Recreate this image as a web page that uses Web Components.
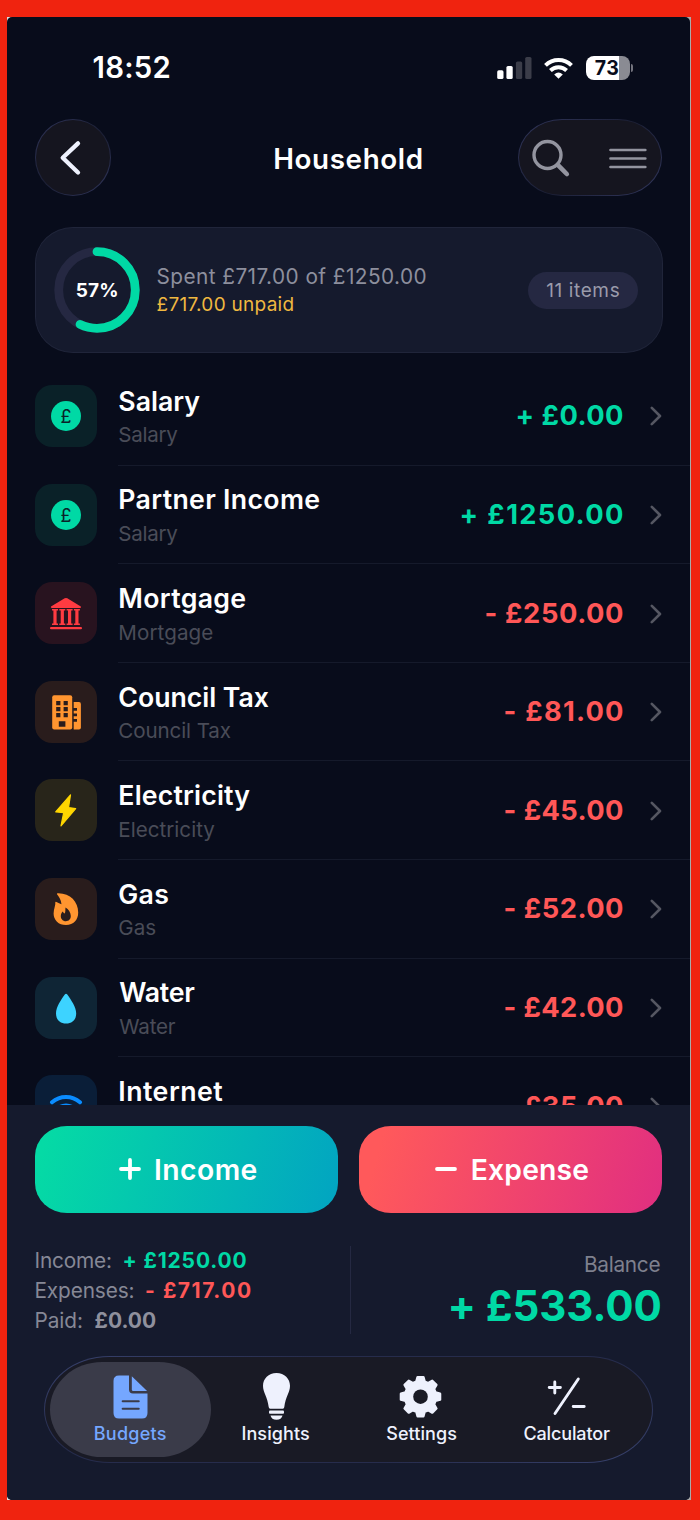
<!DOCTYPE html>
<html lang="en">
<head>
<meta charset="utf-8">
<title>Household budget</title>
<style>
html,body{margin:0;background:#f0230f}
body{width:700px;height:1520px;overflow:hidden;font-family:Inter,"Liberation Sans",sans-serif;font-optical-sizing:none;color:#fff}
</style>
</head>
<body>
<budget-app></budget-app>
<script>
const make = (name, html, setup) => customElements.define(name, class extends HTMLElement {
  constructor() {
    super();
    const t = document.createElement('template');
    t.innerHTML = typeof html === 'function' ? html(this) : html;
    this.attachShadow({mode: 'open'}).append(t.content.cloneNode(true));
    if (setup) setup(this, this.shadowRoot);
  }
});

const gear = (() => {
  const p = [];
  for (let i = 0; i < 8; i++) for (const [d, r] of [[-15.5, 15.6], [-8.5, 19.8], [8.5, 19.8], [15.5, 15.6]]) {
    const a = (i * 45 + d - 90) * Math.PI / 180;
    p.push((21 + r * Math.cos(a)).toFixed(2) + ' ' + (21 + r * Math.sin(a)).toFixed(2));
  }
  return 'M' + p.join('L') + 'Z';
})();

/* Category glyphs share a 62 x 62 tile */
const COIN = '<circle cx="31" cy="31" r="15" fill="#00d9a5"/><text x="31" y="37.6" text-anchor="middle" font-family="Inter,sans-serif" font-size="18" font-weight="400" fill="#0a2128">£</text>';
const GLYPHS = {
  coin: ['#0a2128', COIN],
  bank: ['#28131f', '<g fill="#ff3b41"><path d="M16 24.6 29.7 16.3Q31 15.600 32.300 16.300L45.800 24.600Q46.700 26 45 26H16.900Q15.200 26 16 24.600Z"/><path d="M17 27h6v1.600h-1.400v12.800H23V43h-6v-1.600h1.400V28.600H17zM24.300 27h6v1.600h-1.400v12.800h1.400V43h-6v-1.600h1.400V28.600h-1.400zM31.600 27h6v1.600h-1.400v12.800h1.400V43h-6v-1.600H33V28.600h-1.400zM38.900 27h6v1.600h-1.400v12.800h1.400V43h-6v-1.600h1.400V28.600h-1.400z"/><rect x="15" y="45" width="32" height="2.300" rx="1.100"/></g>'],
  building: ['#291c1c', '<g fill="#ff9530"><rect x="17.200" y="14.300" width="20" height="34.200" rx="2"/><path d="M38.700 21H44q1.900 0 1.900 1.900v23.700q0 1.900-1.900 1.900h-5.300z"/></g><path fill="#291c1c" d="M21.200 20h4.200v4.200h-4.200zM28.600 20h4.200v4.200h-4.200zM21.200 26h4.200v4.200h-4.200zM28.600 26h4.200v4.200h-4.200zM21.200 32h4.200v4.200h-4.200zM28.600 32h4.200v4.200h-4.200zM23.800 40.300h6.600v5.400h-6.600zM38 27h4v2.800h-4zM38 32.500h4v2.800h-4zM38 38h4v2.800h-4z"/>'],
  bolt: ['#28251a', '<path d="M35.500 15.900 20.700 32.800 28.700 33.700 26 46.900 40.700 29.600 33.500 28.600Z" fill="#ffd600" stroke="#ffd600" stroke-width="1.200" stroke-linejoin="round"/>'],
  flame: ['#291c1c', '<path fill="#ff9530" d="M22 16.200Q21.600 15.300 22.800 15.300C35 15 43.200 23.500 43.200 34.500C43.200 42 38.500 47 31 47C23.500 47 18.600 42.200 18.600 35.500C18.600 31 20.800 27 20.300 24.300Q20.500 23.200 21.500 24.100Q23 25 26.500 26.200C26 21.500 24 19 22 16.200Z"/><path fill="#291c1c" d="M30.500 29.600C33.500 31.500 35.800 34.500 35.800 38C35.800 41.200 33.700 43.200 30.900 43.200C28 43.200 25.800 41 25.800 38.200C25.800 36 26.600 34.500 27.900 33.500Q28.500 35.300 29.700 35.600C30.700 34 30.200 31.500 30.500 29.600Z"/>'],
  drop: ['#0f2535', '<path fill="#3dd3ff" d="M29.800 17.600Q31 15.800 32.300 17.600C36 22.800 41.200 30.300 41.200 36.600C41.200 42.800 37 46.600 31.100 46.600S21 42.800 21 36.600C21 30.300 26 22.800 29.800 17.600Z"/>'],
  wifi: ['#0a1e38', '<g fill="none" stroke="#0a8cff" stroke-width="4" stroke-linecap="round"><path d="M17 27.300A21.500 21.500 0 0 1 45 27.300"/><path d="M22.500 33.800A12.500 12.500 0 0 1 39.500 33.800"/></g>']
};

make('category-icon', el => {
  const [bg, art] = GLYPHS[el.getAttribute('kind')];
  return `<style>:host{display:block;width:62px;height:62px;border-radius:17px;background:${bg};flex:none}svg{display:block}</style><svg width="62" height="62">${art}</svg>`;
});

make('budget-row', el => {
  const g = n => el.getAttribute(n);
  return `<style>
  :host{display:flex;height:98.620px;flex:none;box-sizing:border-box;padding-left:28px;align-items:stretch}
  category-icon{margin-top:18px}
  .body{margin-left:21px;flex:1;display:flex;align-items:center;border-bottom:1.300px solid #151a2b;padding-right:28.500px;box-sizing:border-box}
  .t{flex:1;padding:4.500px 0 0 1.300px}
  .n,.s{height:34px;line-height:34px;white-space:nowrap}
  .n{font-size:26.700px;font-weight:600}
  .s{font-size:20.600px;color:#4a4c58;padding-top:.5px}
  .a{font-size:27.300px;font-weight:650;line-height:34px;padding-top:1px;color:${g('tone') === 'in' ? '#00d9a5' : '#ff5757'}}
  svg{margin:1px 0 0 26.800px;display:block;flex:none}
  </style>
  <category-icon kind="${g('icon')}"></category-icon>
  <div class="body"><div class="t"><div class="n"><fit-text w="${g('nw')}">${g('name')}</fit-text></div><div class="s">${g('cat') ? `<fit-text w="${g('cw')}">${g('cat')}</fit-text>` : ''}</div></div>
  <div class="a"><fit-text w="${g('aw')}">${g('amount')}</fit-text></div>
  <svg width="12" height="22" viewBox="0 0 12 22" fill="none" stroke="#555762" stroke-width="2.600" stroke-linecap="round" stroke-linejoin="round"><path d="M1.800 2.800 10 11 1.800 19.200"/></svg></div>`;
});

make('status-bar', `<style>
  :host{display:flex;height:102px;box-sizing:border-box;padding:0 57px 0 86.500px;align-items:center;justify-content:space-between}
  .time{font-size:29.300px;font-weight:600;line-height:36px;padding-top:.5px}
  .i{display:flex;align-items:center;gap:13px}
  svg{display:block}
  .b{display:flex;align-items:center;gap:1px}
  .c{width:44px;height:24.500px;border-radius:8px;background:linear-gradient(90deg,#fff 32.500px,#8a8b93 32.500px);color:#080c1b;font-size:19.500px;font-weight:700;line-height:24px;text-align:center;box-sizing:border-box;padding-right:3px}
  .nub{width:2.500px;height:8px;border-radius:0 4px 4px 0;background:#73747e}
  </style>
  <div class="time"><fit-text w="76">18:52</fit-text></div>
  <div class="i">
  <svg width="35" height="22" viewBox="0 0 35 22"><g fill="#fff"><rect y="13.300" x=".2" width="6.300" height="8.700" rx="1.600"/><rect y="9" x="9.400" width="6.300" height="13" rx="1.600"/></g><g fill="#3b3d49"><rect y="4.400" x="18.900" width="6.300" height="17.600" rx="1.600"/><rect y="0" x="28.200" width="6.300" height="22" rx="1.600"/></g></svg>
  <svg width="29" height="22" viewBox="0 0 29 22" style="margin-left:-1px"><g fill="none" stroke="#fff" stroke-width="4"><path d="M1.500 8.300A18.500 18.500 0 0 1 27.500 8.300"/><path d="M6.400 13.500A11.700 11.700 0 0 1 22.600 13.500"/></g><path fill="#fff" d="M10.200 17.400Q14.500 13.600 18.800 17.400L14.500 21.800Z"/></svg>
  <div class="b"><div class="c"><fit-text w="23.500">73</fit-text></div><div class="nub"></div></div>
  </div>`);

const GLASS = 'border:1.500px solid transparent;background:linear-gradient(#15151f,#15151f) padding-box,linear-gradient(140deg,#2e3356 8%,#1b1f35 50%,#2e3356 90%) border-box;box-sizing:border-box;';

make('nav-header', `<style>
  :host{display:grid;grid-template-columns:1fr auto 1fr;align-items:center;height:77px;padding:0 28px 0 27.500px}
  .back{width:76.500px;height:77px;border-radius:50%;${GLASS}}
  .pill{justify-self:end;width:144px;height:77px;border-radius:44px/38.500px;display:flex;align-items:center;${GLASS}}
  svg{display:block}
  .t{font-size:27.800px;font-weight:600;line-height:36px;padding-top:2.500px}
  </style>
  <div class="back"><svg width="74" height="74" viewBox="0 0 74 74" fill="none" stroke="#eef1fd" stroke-width="4.300" stroke-linecap="round" stroke-linejoin="round"><path d="M42 23.400 26.700 37.800 42 52.500"/></svg></div>
  <div class="t"><fit-text w="146.500">Household</fit-text></div>
  <div class="pill"><svg width="141" height="74" viewBox="0 0 141 74" fill="none" stroke="#93949f" stroke-linecap="round"><circle cx="28.500" cy="34" r="13.500" stroke-width="3.400"/><path stroke-width="4.600" d="M39.300 44.300 47.800 53"/><path stroke-width="2.700" d="M91.500 29H126.300M91.500 37.500H126.300M91.500 46H126.300"/></svg></div>`);

make('spend-card', `<style>
  :host{display:flex;align-items:center;margin:31px 27.500px 0 27.500px;height:126px;border-radius:38px/36px;box-sizing:border-box;border:1.500px solid #20253a;background:#151a2d;padding:0 24px 0 18.500px}
  .ring{position:relative;width:86px;height:86px;flex:none}
  .ring svg{display:block}
  .ring div{position:absolute;inset:1px 0 0 0;display:flex;align-items:center;justify-content:center;font-size:19px;font-weight:700;line-height:22px}
  .t{margin-left:17.500px;flex:1;padding-top:2px}
  .a{font-size:20.800px;line-height:28px;color:#8d8f9d}
  .b{font-size:19px;line-height:28px;color:#f0b840}
  .badge{width:110px;height:37px;border-radius:19px;background:#252842;color:#9a9bab;font-size:19px;line-height:37px;text-align:center}
  </style>
  <div class="ring"><svg width="86" height="86" fill="none" stroke-width="8.800"><circle cx="43" cy="43" r="38.300" stroke="#252842"/><circle cx="43" cy="43" r="38.300" stroke="#00d9a5" stroke-linecap="round" pathLength="100" stroke-dasharray="57.300 100" transform="rotate(-90 43 43)"/></svg><div><fit-text w="40.500">57%</fit-text></div></div>
  <div class="t"><div class="a"><fit-text w="268">Spent £717.00 of £1250.00</fit-text></div><div class="b"><fit-text w="136">£717.00 unpaid</fit-text></div></div>
  <div class="badge"><fit-text w="73.500">11 items</fit-text></div>`);

make('action-button', el => `<style>
  :host{display:flex;align-items:center;justify-content:center;flex:1;height:87px;border-radius:32px/30px;font-size:28.300px;font-weight:600;line-height:36px;gap:15.500px;background:${el.getAttribute('kind') === 'income' ? 'linear-gradient(106deg,#05daa5 4%,#02a5c1 98%)' : 'linear-gradient(106deg,#ff595b 8%,#e2307f 97%)'};padding-left:2px;box-sizing:border-box}
  svg{display:block}
  span{padding-top:1.500px}
  </style>
  <svg width="22" height="22" viewBox="0 0 22 22" stroke="#fff" stroke-width="3.800" stroke-linecap="round"><path d="${el.getAttribute('kind') === 'income' ? 'M2 11H20M11 2V20' : 'M2 11H20'}"/></svg><span><slot></slot></span>`);

make('totals-panel', `<style>
  :host{display:flex;justify-content:space-between;margin:33.500px 30px 0 28.500px;height:88px}
  .l{flex:0 0 314px;border-right:1.500px solid #252942;font-size:20.800px;color:#868896}
  .l div{display:flex;line-height:30px;gap:12.500px}
  .l b{font-weight:650;font-size:21px}
  .r{flex:1;text-align:right;display:flex;flex-direction:column;align-items:flex-end}
  .bal{font-size:20.800px;line-height:30px;color:#7e808e;padding-top:4px}
  .big{font-size:42px;font-weight:650;line-height:46px;color:#00d9a5;margin-top:2.500px}
  .in{color:#00d9a5}.out{color:#ff5757}.paid{color:#8f909d}
  </style>
  <div class="l"><div><fit-text w="75.500">Income:</fit-text><b class="in"><fit-text w="123">+ £1250.00</fit-text></b></div>
  <div><fit-text w="98">Expenses:</fit-text><b class="out"><fit-text w="105">- £717.00</fit-text></b></div>
  <div><fit-text w="46.500">Paid:</fit-text><b class="paid"><fit-text w="61.500">£0.00</fit-text></b></div></div>
  <div class="r"><div class="bal"><fit-text w="75.500">Balance</fit-text></div><div class="big"><fit-text w="210">+ £533.00</fit-text></div></div>`);

make('tab-item', `<style>
  :host{position:relative;display:flex;flex-direction:column;align-items:center;flex:1;height:95px;color:#eef1fd;font-size:18px;font-weight:500}
  :host([active]){color:#75a7ff}
  :host([active])::before{content:"";position:absolute;inset:0 -8px;background:#3a3b49;border-radius:52px/47.500px}
  ::slotted(svg){display:block;position:relative;margin-top:9.500px}
  .l{position:relative;line-height:24px;margin-top:1px}
  </style><slot name="icon"></slot><div class="l"><slot></slot></div>`);

make('tab-bar', `<style>
  :host{display:flex;margin:21.500px 37px 0 36.500px;height:107.500px;padding:5px 13px;border-radius:66px/54px;border:1.500px solid transparent;background:linear-gradient(#191a25,#191a25) padding-box,linear-gradient(160deg,#39436f 0%,#262c4c 30%,#262c4c 70%,#39436f 100%) border-box;box-sizing:border-box}
  </style>
  <tab-item active><svg slot="icon" width="48" height="50" viewBox="0 0 48 50"><g transform="translate(7.500 4.500)"><path fill="#75a7ff" d="M5.500 0H15.500V14Q15.500 18 19.500 18H34V37.500Q34 43 28.500 43H5.500Q0 43 0 37.500V5.500Q0 0 5.500 0Z"/><path fill="#75a7ff" d="M18.300.7 33.600 15.600H19.800Q18.300 15.600 18.300 14.100Z"/><path stroke="#3a3b49" stroke-width="2.100" stroke-linecap="round" d="M9.200 25.700H25.200M9.200 33.300H25.200"/></g></svg><fit-text w="71">Budgets</fit-text></tab-item>
  <tab-item><svg slot="icon" width="48" height="50" viewBox="0 0 48 50"><g fill="#eef1fd" transform="translate(11 2)"><path d="M13.500 0C21.500 0 27 5.800 27 12.800C27 19.500 22.500 24 21.300 34Q21.200 35.700 19.800 35.700H7.200Q5.800 35.700 5.700 34C4.500 24 0 19.500 0 12.800C0 5.800 5.500 0 13.500 0Z"/><rect x="6" y="37.500" width="15" height="3.200" rx="1"/><path d="M7.500 42.600H19.500Q18.500 46.800 13.500 46.800T7.500 42.600Z"/></g></svg><fit-text w="66.500">Insights</fit-text></tab-item>
  <tab-item><svg slot="icon" width="48" height="50" viewBox="0 0 48 50"><g transform="translate(2.500 4.700)"><path fill="#eef1fd" stroke="#eef1fd" stroke-width="2.400" stroke-linejoin="round" d="${gear}"/><circle cx="21" cy="21" r="7.300" fill="#191a25"/></g></svg><fit-text w="70">Settings</fit-text></tab-item>
  <tab-item><svg slot="icon" width="48" height="50" viewBox="0 0 48 50"><path fill="none" stroke="#eef1fd" stroke-width="2.900" stroke-linecap="round" d="M6.200 16.500H17.400M11.800 10.900V22.100M35.300 8 12 42.500M30.200 35.500H41.200"/></svg><fit-text w="86.500">Calculator</fit-text></tab-item>`);

const ROWS = [
  ['coin', 'Salary', 81, 'Salary', 59, '+ £0.00', 105.500, 'in'],
  ['coin', 'Partner Income', 200, 'Salary', 59, '+ £1250.00', 161.500, 'in'],
  ['bank', 'Mortgage', 126, 'Mortgage', 93, '- £250.00', 137.500, 'out'],
  ['building', 'Council Tax', 149.500, 'Council Tax', 111.500, '- £81.00', 118.500, 'out'],
  ['bolt', 'Electricity', 131, 'Electricity', 96, '- £45.00', 118.500, 'out'],
  ['flame', 'Gas', 49, 'Gas', 36, '- £52.00', 118.500, 'out'],
  ['drop', 'Water', 76, 'Water', 56.500, '- £42.00', 118.500, 'out'],
  ['wifi', 'Internet', 103, '', 0, '- £35.00', 118.500, 'out']
];

make('budget-app', `<style>
  :host{display:block;box-sizing:border-box;padding:17px 9px 20.500px 7px;width:700px;height:1520px}
  .edge{height:100%;background:linear-gradient(90deg,#ddd,#aaa);padding-right:.6px;box-sizing:border-box}
  .phone{height:100%;background:#080c1b;border-radius:5px;overflow:hidden;display:flex;flex-direction:column}
  .list{height:738px;flex:none;overflow:hidden;margin-top:14px;display:flex;flex-direction:column}
  .panel{flex:1;background:#151a2d}
  .btns{display:flex;gap:21px;margin:0 28px;padding-top:20.500px}
  </style>
  <div class="edge"><div class="phone"><status-bar></status-bar><nav-header></nav-header><spend-card></spend-card>
  <div class="list">${ROWS.map(r => `<budget-row icon="${r[0]}" name="${r[1]}" nw="${r[2]}" cat="${r[3]}" cw="${r[4]}" amount="${r[5]}" aw="${r[6]}" tone="${r[7]}"></budget-row>`).join('')}</div>
  <div class="panel"><div class="btns"><action-button kind="income"><fit-text w="100.500">Income</fit-text></action-button><action-button kind="expense"><fit-text w="115.500">Expense</fit-text></action-button></div>
  <totals-panel></totals-panel><tab-bar></tab-bar></div></div></div>`);

/* Sets a label's tracking so that its glyphs span exactly w pixels, side bearings excluded */
customElements.define('fit-text', class extends HTMLElement {
  constructor() {
    super();
    this.attachShadow({mode: 'open'}).innerHTML = '<style>:host{display:inline-block;white-space:pre}</style><slot></slot>';
  }
  connectedCallback() {
    const cs = getComputedStyle(this), ctx = document.createElement('canvas').getContext('2d');
    ctx.font = `${cs.fontWeight} ${cs.fontSize} ${cs.fontFamily}`;
    const s = this.textContent, w = +this.getAttribute('w'), m = ctx.measureText(s);
    const advance = this.getBoundingClientRect().width;
    const left = -m.actualBoundingBoxLeft, right = m.width - m.actualBoundingBoxRight;
    const ls = (w - (advance - left - right)) / (s.length - 1);
    this.style.letterSpacing = ls + 'px';
    this.style.marginLeft = -left + 'px';
    this.style.marginRight = -(right + ls) + 'px';
  }
});
</script>
</body>
</html>
